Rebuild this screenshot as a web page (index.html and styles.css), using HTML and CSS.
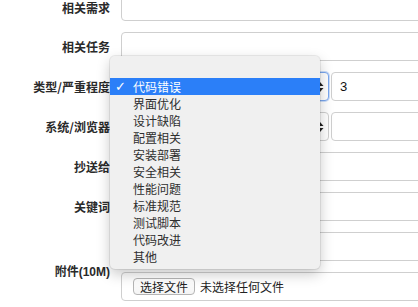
FILE: index.html
```html
<!DOCTYPE html>
<html lang="zh">
<head>
    <meta charset="UTF-8">
    <title>提交Bug</title>
    <link rel="stylesheet" href="styles.css">
</head>
<body>
    <div class="form">
        <div class="row">
            <label class="first">相关需求</label>
            <div class="field"><div class="box"></div></div>
        </div>
        <div class="row">
            <label>相关任务</label>
            <div class="field"><div class="box"></div></div>
        </div>
        <div class="row">
            <label>类型/严重程度</label>
            <div class="field split">
                <div class="box select focus">
                    <svg class="arrows" width="8" height="12" viewBox="0 0 8 12"><path d="M4 1L7.5 5H0.5Z M4 11L7.5 7H0.5Z" fill="#222"/></svg>
                </div>
                <div class="box value">3</div>
            </div>
        </div>
        <div class="row">
            <label>系统/浏览器</label>
            <div class="field split">
                <div class="box select">
                    <svg class="arrows" width="8" height="12" viewBox="0 0 8 12"><path d="M4 1L7.5 5H0.5Z M4 11L7.5 7H0.5Z" fill="#222"/></svg>
                </div>
                <div class="box"></div>
            </div>
        </div>
        <div class="row">
            <label>抄送给</label>
            <div class="field"><div class="box"></div></div>
        </div>
        <div class="row">
            <label>关键词</label>
            <div class="field"><div class="box"></div></div>
        </div>
        <div class="row">
            <label></label>
            <div class="field"><div class="box"></div></div>
        </div>
        <div class="row">
            <label class="top">附件(10M)</label>
            <div class="field">
                <div class="box file">
                    <span class="file-btn">选择文件</span>
                    <span class="file-name">未选择任何文件</span>
                </div>
            </div>
        </div>
    </div>

    <ul class="menu">
        <li class="blank"></li>
        <li class="active"><span class="check">✓</span>代码错误</li>
        <li>界面优化</li>
        <li>设计缺陷</li>
        <li>配置相关</li>
        <li>安装部署</li>
        <li>安全相关</li>
        <li>性能问题</li>
        <li>标准规范</li>
        <li>测试脚本</li>
        <li>代码改进</li>
        <li>其他</li>
    </ul>
</body>
</html>
```

FILE: styles.css
```css
* {
    box-sizing: border-box;
    margin: 0;
    padding: 0;
}

body {
    font-family: "Noto Sans CJK SC", "Liberation Sans", sans-serif;
    font-size: 12px;
    color: #333;
    background: #fff;
    overflow: hidden;
    position: relative;
    height: 307px;
}

.form {
    margin-top: -8px;
    display: flex;
    flex-direction: column;
    gap: 11px;
}

.row {
    display: flex;
    align-items: center;
    gap: 11px;
    height: 29px;
}

.row label {
    width: 110px;
    flex: none;
    text-align: right;
    font-weight: bold;
    line-height: 14px;
    color: #2a2a2a;
}

.row label.first {
    align-self: flex-end;
    margin-bottom: 6px;
}

.row label.top {
    align-self: flex-start;
    margin-top: -7px;
    font-family: "Liberation Sans", "Noto Sans CJK SC", sans-serif;
}

.field {
    width: 330px;
    flex: none;
    height: 29px;
}

.field.split {
    display: flex;
    gap: 2px;
}

.box {
    height: 29px;
    width: 100%;
    border: 1px solid #cfcfcf;
    border-radius: 4px;
    background: #fff;
}

.select {
    width: 208px;
    flex: none;
    position: relative;
}

.select.focus {
    border-color: #7aa7ee;
    box-shadow: 0 0 0 1px rgba(110, 160, 240, 0.35);
}

.arrows {
    position: absolute;
    right: 4px;
    top: 8px;
}

.value {
    flex: 1;
    padding-left: 8px;
    line-height: 27px;
    font-family: "Liberation Sans", sans-serif;
    font-size: 13px;
    color: #111;
}

.file {
    display: flex;
    align-items: center;
    padding-left: 11px;
    gap: 5px;
}

.file-btn {
    display: inline-block;
    height: 17px;
    line-height: 15px;
    padding: 0 6px;
    border: 1px solid #b5b5b5;
    border-radius: 4px;
    background: linear-gradient(#fff, #f4f4f4);
    color: #222;
}

.file-name {
    color: #222;
}

.menu {
    position: absolute;
    left: 110px;
    top: 56px;
    width: 210px;
    list-style: none;
    background: #f0f0f0;
    border-radius: 5px;
    padding: 5px 0 4px;
    box-shadow: 0 0 0 1px rgba(0, 0, 0, 0.07), 0 5px 14px rgba(0, 0, 0, 0.22);
}

.menu li {
    height: 17px;
    line-height: 17px;
    padding-left: 23px;
    color: #2e2e2e;
    position: relative;
}

.menu li.active {
    background: #2b7ff8;
    color: #fff;
}

.check {
    position: absolute;
    left: 5px;
    top: 0;
    font-family: "DejaVu Sans", sans-serif;
    font-weight: bold;
    font-size: 13px;
}
```
